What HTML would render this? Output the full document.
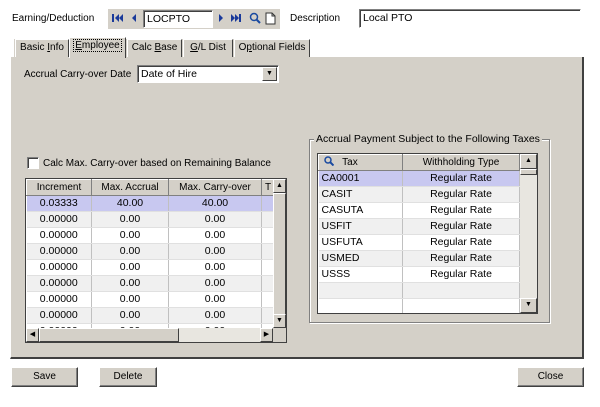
<!DOCTYPE html>
<html><head><style>
*{box-sizing:border-box;margin:0;padding:0}
body{width:600px;height:407px;background:#fff;font-family:"Liberation Sans",sans-serif;font-size:10px;color:#000;position:relative;overflow:hidden}
.a{position:absolute}
.g{background:#d4d0c8}
.in{background:#fff;border-top:1px solid #808080;border-left:1px solid #808080;border-bottom:1px solid #fff;border-right:1px solid #fff;box-shadow:inset 1px 1px 0 #404040;padding:2px 3px;line-height:12px;font-size:10.5px}
.btn{background:#d4d0c8;border-top:1px solid #fff;border-left:1px solid #fff;border-right:1px solid #404040;border-bottom:1px solid #404040;box-shadow:inset -1px -1px 0 #808080;text-align:center;line-height:17px}
.tab{position:absolute;top:39px;height:19px;background:#d4d0c8;border-top:1px solid #fff;border-left:1px solid #fff;border-right:1px solid #404040;line-height:16px;text-align:center}
table{border-collapse:collapse;table-layout:fixed}
td{height:16px;border-right:1px solid #c0c0c0;border-bottom:1px solid #e0e0e0;padding:0 3px;white-space:nowrap;overflow:hidden;line-height:15px;font-size:10.5px}
th{height:16px;font-weight:normal;background:#d4d0c8;border-top:1px solid #fff;border-left:1px solid #fff;border-right:1px solid #808080;border-bottom:1px solid #808080;line-height:14px;white-space:nowrap;overflow:hidden}
tr.alt td{background:#f0f0f0}
tr.sel td{background:#c8c8f0}
.sb{background:#e8e6e0}
.sbb{position:absolute;background:#d4d0c8;border-top:1px solid #fff;border-left:1px solid #fff;border-right:1px solid #404040;border-bottom:1px solid #404040;font-size:7px;text-align:center;line-height:11px}
u{text-decoration:underline}
</style></head><body>
<div class="a" style="left:12px;top:13px">Earning/Deduction</div>
<div class="a g" style="left:108px;top:9px;width:172px;height:20px"></div>
<svg class="a" style="left:112px;top:13px" width="28" height="10"><rect x="0" y="1" width="2" height="8" fill="#1a3a9a"/><path d="M7 1L3 5L7 9Z M11 1L7 5L11 9Z" fill="#1a3a9a"/><path d="M24 1L20 5L24 9Z" fill="#1a3a9a"/></svg>
<div class="a in" style="left:143px;top:10px;width:70px;height:18px">LOCPTO</div>
<svg class="a" style="left:218px;top:13px" width="28" height="10"><path d="M1 1L5 5L1 9Z" fill="#1a3a9a"/><path d="M13 1L17 5L13 9Z M17 1L21 5L17 9Z" fill="#1a3a9a"/><rect x="21" y="1" width="2" height="8" fill="#1a3a9a"/></svg>
<svg class="a" style="left:249px;top:12px" width="12" height="12"><circle cx="5" cy="5" r="3.5" fill="none" stroke="#1a4aa0" stroke-width="1.5"/><line x1="7.5" y1="7.5" x2="11" y2="11" stroke="#1a4aa0" stroke-width="2"/></svg>
<svg class="a" style="left:265px;top:12px" width="11" height="13"><path d="M1 1H7L10 4V12H1Z" fill="#fff" stroke="#333"/><path d="M7 1V4H10" fill="none" stroke="#333"/></svg>
<div class="a" style="left:290px;top:13px">Description</div>
<div class="a in" style="left:359px;top:9px;width:222px;height:19px">Local PTO</div>

<div class="a g" style="left:14px;top:39px;width:296px;height:19px"></div>
<div class="tab" style="left:15px;width:54px">Basic <u>I</u>nfo</div>
<div class="tab" style="left:69px;top:37px;height:21px;width:57px;z-index:2"><span style="outline:1px dotted #000;padding:0 1px"><u>E</u>mployee</span></div>
<div class="tab" style="left:127px;width:55px">Calc <u>B</u>ase</div>
<div class="tab" style="left:183px;width:50px"><u>G</u>/L Dist</div>
<div class="tab" style="left:234px;width:76px">O<u>p</u>tional Fields</div>

<div class="a g" style="left:10px;top:57px;width:574px;height:302px;border-left:1px solid #fff;border-right:2px solid #404040;border-bottom:2px solid #404040"></div>

<div class="a" style="left:24px;top:69px">Accrual Carry-over Date</div>
<div class="a in" style="left:137px;top:65px;width:142px;height:18px">Date of Hire</div>
<div class="sbb" style="left:262px;top:67px;width:15px;height:14px;line-height:12px">▼</div>

<div class="a in" style="left:27px;top:157px;width:12px;height:12px;padding:0"></div>
<div class="a" style="left:43px;top:158px">Calc Max. Carry-over based on Remaining Balance</div>

<div class="a" style="left:25px;top:178px;width:262px;height:165px;border:1px solid #404040;background:#fff;overflow:hidden">
<table style="width:248px">
<colgroup><col style="width:65px"><col style="width:77px"><col style="width:93px"><col style="width:13px"></colgroup>
<tr><th>Increment</th><th>Max. Accrual</th><th>Max. Carry-over</th><th>T</th></tr>
<tr class="sel"><td style="text-align:center">0.03333</td><td style="text-align:center">40.00</td><td style="text-align:center">40.00</td><td></td></tr>
<tr class="alt"><td style="text-align:center">0.00000</td><td style="text-align:center">0.00</td><td style="text-align:center">0.00</td><td></td></tr>
<tr><td style="text-align:center">0.00000</td><td style="text-align:center">0.00</td><td style="text-align:center">0.00</td><td></td></tr>
<tr class="alt"><td style="text-align:center">0.00000</td><td style="text-align:center">0.00</td><td style="text-align:center">0.00</td><td></td></tr>
<tr><td style="text-align:center">0.00000</td><td style="text-align:center">0.00</td><td style="text-align:center">0.00</td><td></td></tr>
<tr class="alt"><td style="text-align:center">0.00000</td><td style="text-align:center">0.00</td><td style="text-align:center">0.00</td><td></td></tr>
<tr><td style="text-align:center">0.00000</td><td style="text-align:center">0.00</td><td style="text-align:center">0.00</td><td></td></tr>
<tr class="alt"><td style="text-align:center">0.00000</td><td style="text-align:center">0.00</td><td style="text-align:center">0.00</td><td></td></tr>
<tr><td style="text-align:center">0.00000</td><td style="text-align:center">0.00</td><td style="text-align:center">0.00</td><td></td></tr>
</table>
<div class="a sb" style="left:247px;top:0;width:13px;height:149px"></div>
<div class="sbb" style="left:247px;top:0;width:13px;height:14px">▲</div>
<div class="sbb" style="left:247px;top:14px;width:13px;height:122px"></div>
<div class="sbb" style="left:247px;top:135px;width:13px;height:14px">▼</div>
<div class="a sb" style="left:0;top:149px;width:260px;height:14px"></div>
<div class="sbb" style="left:0;top:149px;width:13px;height:14px">◀</div>
<div class="sbb" style="left:13px;top:149px;width:140px;height:14px"></div>
<div class="sbb" style="left:234px;top:149px;width:13px;height:14px">▶</div>
<div class="a g" style="left:247px;top:149px;width:13px;height:14px"></div>
</div>

<div class="a" style="left:309px;top:139px;width:241px;height:184px;border:1px solid #808080;box-shadow:1px 1px 0 #fff,inset 1px 1px 0 #fff"></div>
<div class="a g" style="left:314px;top:133px;padding:0 2px;font-size:10.5px">Accrual Payment Subject to the Following Taxes</div>

<div class="a" style="left:317px;top:153px;width:221px;height:161px;border:1px solid #404040;background:#fff;overflow:hidden">
<table style="width:201px">
<colgroup><col style="width:84px"><col style="width:117px"></colgroup>
<tr><th style="text-align:left;padding-left:5px"><svg width="10" height="10" style="vertical-align:-1px"><circle cx="4" cy="4" r="3" fill="none" stroke="#1a4aa0" stroke-width="1.5"/><line x1="6" y1="6" x2="9.5" y2="9.5" stroke="#1a4aa0" stroke-width="2"/></svg>&nbsp;&nbsp; Tax</th><th>Withholding Type</th></tr>
<tr class="sel"><td>CA0001</td><td style="text-align:center">Regular Rate</td></tr>
<tr class="alt"><td>CASIT</td><td style="text-align:center">Regular Rate</td></tr>
<tr><td>CASUTA</td><td style="text-align:center">Regular Rate</td></tr>
<tr class="alt"><td>USFIT</td><td style="text-align:center">Regular Rate</td></tr>
<tr><td>USFUTA</td><td style="text-align:center">Regular Rate</td></tr>
<tr class="alt"><td>USMED</td><td style="text-align:center">Regular Rate</td></tr>
<tr><td>USSS</td><td style="text-align:center">Regular Rate</td></tr>
<tr class="alt"><td></td><td></td></tr>
<tr><td></td><td></td></tr>
</table>
<div class="a sb" style="left:202px;top:0;width:17px;height:159px"></div>
<div class="sbb" style="left:202px;top:0;width:17px;height:15px">▲</div>
<div class="sbb" style="left:202px;top:15px;width:17px;height:6px"></div>
<div class="sbb" style="left:202px;top:144px;width:17px;height:15px">▼</div>
</div>

<div class="a btn" style="left:11px;top:367px;width:67px;height:20px">Save</div>
<div class="a btn" style="left:99px;top:367px;width:58px;height:20px">Delete</div>
<div class="a btn" style="left:517px;top:367px;width:67px;height:20px">Close</div>
</body></html>
